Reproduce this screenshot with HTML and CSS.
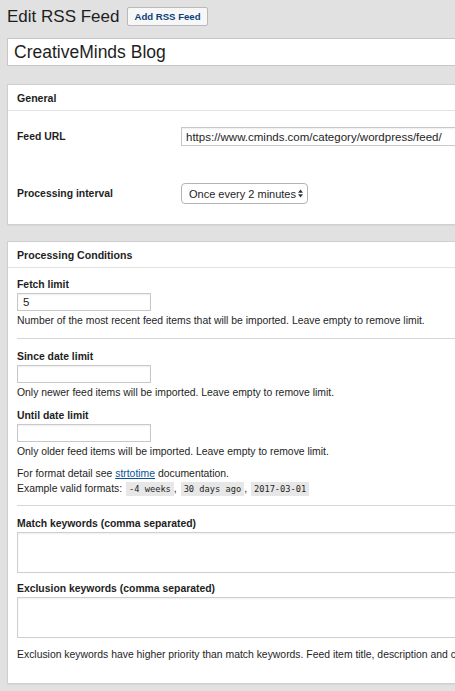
FILE: index.html
```html
<!DOCTYPE html>
<html lang="en">
<head>
<meta charset="utf-8">
<title>Edit RSS Feed</title>
<link rel="stylesheet" href="styles.css">
</head>
<body>
<div class="wrap">
  <div class="page-head">
    <h1 class="page-title">Edit RSS Feed</h1>
    <a class="add-btn" href="#">Add RSS Feed</a>
  </div>

  <input class="post-title" type="text" value="CreativeMinds Blog">

  <section class="panel">
    <h2 class="panel-head">General</h2>
    <div class="form-table">
      <div class="form-row">
        <label class="row-label">Feed URL</label>
        <input class="text url" type="text" value="https://www.cminds.com/category/wordpress/feed/">
      </div>
      <div class="form-row">
        <label class="row-label">Processing interval</label>
        <div class="select">
          <span>Once every 2 minutes</span>
          <svg class="select-arrows" width="5" height="9" viewBox="0 0 5 9"><path d="M2.5 0.5 L5 3.8 H0 Z M2.5 8.5 L5 5.2 H0 Z" fill="#333"/></svg>
        </div>
      </div>
    </div>
  </section>

  <section class="panel">
    <h2 class="panel-head">Processing Conditions</h2>
    <div class="panel-body">
      <div class="field first">
        <label class="field-label">Fetch limit</label>
        <input class="text small" type="text" value="5">
        <p class="desc">Number of the most recent feed items that will be imported. Leave empty to remove limit.</p>
      </div>

      <hr class="sep">

      <div class="field">
        <label class="field-label">Since date limit</label>
        <input class="text small" type="text">
        <p class="desc">Only newer feed items will be imported. Leave empty to remove limit.</p>
      </div>

      <div class="field">
        <label class="field-label">Until date limit</label>
        <input class="text small" type="text">
        <p class="desc">Only older feed items will be imported. Leave empty to remove limit.</p>
      </div>

      <p class="note">For format detail see <a href="#">strtotime</a> documentation.<br>
      Example valid formats: <code>-4 weeks</code>, <code>30 days ago</code>, <code>2017-03-01</code></p>

      <hr class="sep after-note">

      <div class="field first">
        <label class="field-label">Match keywords (comma separated)</label>
        <textarea class="area"></textarea>
      </div>

      <div class="field">
        <label class="field-label">Exclusion keywords (comma separated)</label>
        <textarea class="area"></textarea>
      </div>

      <p class="desc last">Exclusion keywords have higher priority than match keywords. Feed item title, description and content are checked.</p>
    </div>
  </section>
</div>
</body>
</html>
```

FILE: styles.css
```css
html, body {
  margin: 0;
  padding: 0;
  overflow: hidden;
  background: #e1e1e1;
}

body {
  font-family: "Liberation Sans", Arial, sans-serif;
  color: #1e1e1e;
  font-size: 10.4px;
}

.wrap {
  width: 700px;
  padding: 0 0 20px 7px;
}

/* page heading with action button */
.page-head {
  display: flex;
  align-items: center;
  gap: 8px;
  padding-top: 7px;
  height: 19px;
}

.page-title {
  margin: 0;
  font-size: 17px;
  font-weight: 400;
  line-height: 19px;
  color: #1e1e1e;
}

.add-btn {
  display: inline-flex;
  align-items: center;
  box-sizing: border-box;
  height: 19px;
  padding: 0 6px;
  border: 1px solid #b9b9b9;
  border-radius: 2px;
  background: #f7f7f7;
  color: #0d3f78;
  font-size: 9.6px;
  font-weight: 700;
  text-decoration: none;
}

.post-title {
  display: block;
  box-sizing: border-box;
  margin: 12px 0 0;
  width: 100%;
  height: 28px;
  padding: 0 6px;
  border: 1px solid #c6c6c6;
  background: #fff;
  font-family: "Liberation Sans", Arial, sans-serif;
  font-size: 17.5px;
  color: #1e1e1e;
  outline: none;
}

/* postbox panels */
.panel {
  margin-top: 18px;
  background: #fff;
  border: 1px solid #cfcfcf;
  box-shadow: 0 1px 1px rgba(0, 0, 0, 0.04);
}

.panel + .panel {
  margin-top: 16px;
}

.panel-head {
  margin: 0;
  height: 25px;
  padding: 0 9px;
  display: flex;
  align-items: center;
  border-bottom: 1px solid #e2e2e2;
  font-size: 10.6px;
  font-weight: 700;
  color: #1e1e1e;
}

/* General: label / control rows */
.form-table {
  padding: 0 9px;
}

.form-row {
  display: flex;
  align-items: center;
  padding: 16px 0 21px;
}

.form-row:last-child {
  padding-bottom: 20px;
}

.row-label {
  width: 164px;
  flex: none;
  font-weight: 700;
}

.text {
  box-sizing: border-box;
  height: 19px;
  padding: 0 4px;
  border: 1px solid #c8c8c8;
  box-shadow: inset 0 1px 2px rgba(0, 0, 0, 0.07);
  background: #fff;
  font-family: "Liberation Sans", Arial, sans-serif;
  font-size: 11.5px;
  color: #1e1e1e;
  outline: none;
}

.url {
  width: 320px;
}

.select {
  position: relative;
  box-sizing: border-box;
  width: 127px;
  height: 21px;
  display: flex;
  align-items: center;
  padding: 0 0 0 7px;
  border: 1px solid #b4b4b4;
  border-radius: 4px;
  background: #fff;
  font-size: 11px;
  color: #1e1e1e;
}

.select-arrows {
  position: absolute;
  right: 4px;
  top: 5px;
}

/* Processing Conditions */
.panel-body {
  padding: 10px 9px 21px;
}

.field {
  margin-top: 9px;
}

.field.first {
  margin-top: 0;
}

.field-label {
  display: block;
  line-height: 14px;
  margin-bottom: 1px;
  font-weight: 700;
}

.small {
  display: block;
  width: 134px;
  height: 18px;
  padding: 0 5px;
}

.desc {
  margin: 3px 0 0;
  line-height: 14px;
}

.desc.last {
  margin-top: 10px;
}

.sep {
  margin: 10px 0 11px;
  border: 0;
  border-top: 1px solid #d6d6d6;
  height: 0;
}

.sep.after-note {
  margin-top: 9px;
}

.note {
  margin: 7px 0 0;
  line-height: 15px;
}

.note a {
  color: #0b5394;
}

code {
  font-family: "DejaVu Sans Mono", monospace;
  font-size: 8.7px;
  line-height: 10px;
  background: #e7e7e7;
  padding: 2px 3px;
  margin-left: 1px;
  color: #1e1e1e;
}

.area {
  display: block;
  box-sizing: border-box;
  width: 100%;
  height: 41px;
  margin: 0;
  border: 1px solid #cfcfcf;
  box-shadow: inset 0 1px 2px rgba(0, 0, 0, 0.07);
  resize: none;
  background: #fff;
}
```
